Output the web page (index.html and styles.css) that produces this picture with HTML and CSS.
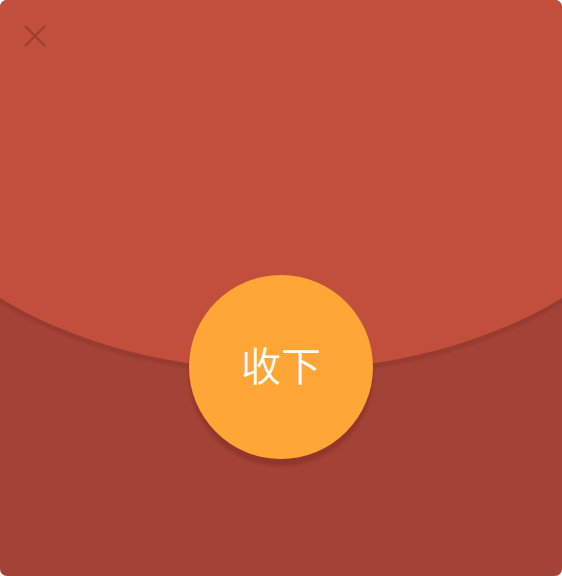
FILE: index.html
```html
<!DOCTYPE html>
<html lang="zh">
<head>
<meta charset="utf-8">
<title>红包</title>
<link rel="stylesheet" href="styles.css">
</head>
<body>
<div class="envelope">
  <div class="flap"></div>
  <button class="close" aria-label="关闭">
    <svg width="24" height="24" viewBox="0 0 24 24"><path d="M2 2 L22 22 M22 2 L2 22" stroke="#9e3f33" stroke-width="2.4" fill="none"/></svg>
  </button>
  <div class="action">
    <button class="open-btn">收下</button>
  </div>
</div>
</body>
</html>
```
FILE: styles.css
```css
html, body {
  margin: 0;
  padding: 0;
  background: #ffffff;
}
body {
  width: 562px;
  height: 576px;
}
.envelope {
  position: relative;
  width: 562px;
  height: 576px;
  background: #a34236;
  border-radius: 7px;
  overflow: hidden;
  display: flex;
  flex-direction: column;
}
.flap {
  position: absolute;
  left: -119px;
  top: -130px;
  width: 800px;
  height: 500px;
  border-radius: 50%;
  background: #c14f3c;
  box-shadow: 0 5px 2px rgba(120, 35, 25, 0.22);
}
.close {
  position: absolute;
  left: 23px;
  top: 24px;
  width: 24px;
  height: 24px;
  padding: 0;
  border: 0;
  background: none;
  display: flex;
  z-index: 2;
}
.action {
  position: relative;
  z-index: 1;
  margin-top: 275px;
  display: flex;
  justify-content: center;
}
.open-btn {
  width: 184px;
  height: 184px;
  border-radius: 50%;
  border: 0;
  background: #ffa637;
  color: #ffffff;
  font-family: "Noto Sans CJK SC", "Noto Sans", sans-serif;
  font-size: 40px;
  font-weight: 350;
  padding: 0 0 6px;
  box-shadow: 0 7px 3px rgba(110, 30, 20, 0.3);
}
```
